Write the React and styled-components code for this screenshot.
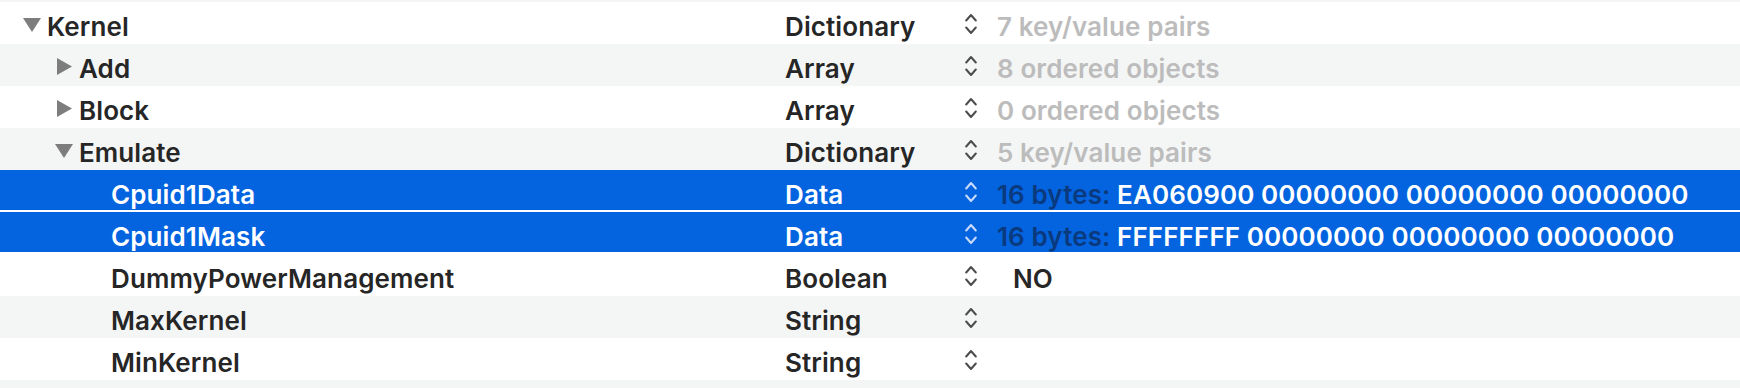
import React from 'react'
import styled, { createGlobalStyle } from 'styled-components'

const GlobalStyle = createGlobalStyle`
  html, body {
    margin: 0;
    padding: 0;
    background: #ffffff;
    overflow: hidden;
  }
  body {
    font-family: Inter, "Liberation Sans", sans-serif;
  }
`

const Outline = styled.div`
  width: 1740px;
  height: 388px;
  display: flex;
  flex-direction: column;
  overflow: hidden;
  font-size: 26px;
  font-weight: 600;
  letter-spacing: 0.1px;
  color: #262626;
`

const TopStrip = styled.div`
  height: 2px;
  background: #f4f5f5;
  flex-shrink: 0;
`

const Row = styled.div`
  display: grid;
  grid-template-columns: 785px 180px 32px 1fr;
  height: 42px;
  flex-shrink: 0;
  box-sizing: border-box;
  background: ${p => (p.$selected ? '#0464e0' : p.$striped ? '#f4f5f5' : '#ffffff')};
  border-bottom: ${p => (p.$selected ? '2px solid #ffffff' : 'none')};
  color: ${p => (p.$selected ? '#ffffff' : '#262626')};
`

const Cell = styled.div`
  display: flex;
  align-items: flex-start;
  padding-top: 7px;
  line-height: 36px;
  white-space: pre;
  overflow: hidden;
`

const KeyCell = styled(Cell)`
  padding-left: ${p => 15 + p.$level * 32}px;
`

const Disclosure = styled.span`
  width: 32px;
  flex-shrink: 0;
  display: flex;
  align-items: center;
  height: 36px;
  padding-left: ${p => (p.$open ? 8 : 10)}px;
  box-sizing: border-box;
`

const StepperCell = styled.div`
  padding-top: 9px;
`

const ValueCell = styled(Cell)`
  display: block;
  padding-left: ${p => (p.$popup ? 16 : 0)}px;
  color: ${p => (p.$muted ? '#bcbcbc' : 'inherit')};
`

const Hint = styled.span`
  color: #0a3a7d;
`

function Triangle({ open }) {
  if (open) {
    return (
      <svg width="18" height="14" viewBox="0 0 18 14" style={{ marginTop: -4 }}>
        <polygon points="0,0 18,0 9,14" fill="#7d7d7d" />
      </svg>
    )
  }
  return (
    <svg width="15" height="17" viewBox="0 0 15 17" style={{ marginTop: -6 }}>
      <polygon points="0,0 15,8.5 0,17" fill="#7d7d7d" />
    </svg>
  )
}

function Stepper({ light }) {
  const c = light ? '#c9dafb' : '#4d4d4d'
  return (
    <svg width="12" height="24" viewBox="0 0 12 24">
      <polyline points="1.2,8.5 6,3 10.8,8.5" fill="none" stroke={c} strokeWidth="2" strokeLinecap="round" strokeLinejoin="round" />
      <polyline points="1.2,15.5 6,21 10.8,15.5" fill="none" stroke={c} strokeWidth="2" strokeLinecap="round" strokeLinejoin="round" />
    </svg>
  )
}

const rows = [
  { key: 'Kernel', level: 0, disclosure: 'open', type: 'Dictionary', value: '7 key/value pairs', muted: true },
  { key: 'Add', level: 1, disclosure: 'closed', type: 'Array', value: '8 ordered objects', muted: true },
  { key: 'Block', level: 1, disclosure: 'closed', type: 'Array', value: '0 ordered objects', muted: true },
  { key: 'Emulate', level: 1, disclosure: 'open', type: 'Dictionary', value: '5 key/value pairs', muted: true },
  { key: 'Cpuid1Data', level: 2, type: 'Data', hint: '16 bytes: ', value: 'EA060900 00000000 00000000 00000000', selected: true },
  { key: 'Cpuid1Mask', level: 2, type: 'Data', hint: '16 bytes: ', value: 'FFFFFFFF 00000000 00000000 00000000', selected: true },
  { key: 'DummyPowerManagement', level: 2, type: 'Boolean', value: 'NO', popup: true },
  { key: 'MaxKernel', level: 2, type: 'String', value: '' },
  { key: 'MinKernel', level: 2, type: 'String', value: '' },
]

function App() {
  return (
    <>
      <GlobalStyle />
      <Outline>
        <TopStrip />
        {rows.map((r, i) => (
          <Row key={r.key} $striped={i % 2 === 1} $selected={r.selected}>
            <KeyCell $level={r.level}>
              {r.disclosure ? (
                <Disclosure $open={r.disclosure === 'open'}>
                  <Triangle open={r.disclosure === 'open'} />
                </Disclosure>
              ) : (
                <Disclosure />
              )}
              {r.key}
            </KeyCell>
            <Cell>{r.type}</Cell>
            <StepperCell>
              <Stepper light={r.selected} />
            </StepperCell>
            <ValueCell $muted={r.muted} $popup={r.popup}>
              {r.hint && <Hint>{r.hint}</Hint>}
              {r.value}
            </ValueCell>
          </Row>
        ))}
        <Row $striped />
      </Outline>
    </>
  )
}

export default App
